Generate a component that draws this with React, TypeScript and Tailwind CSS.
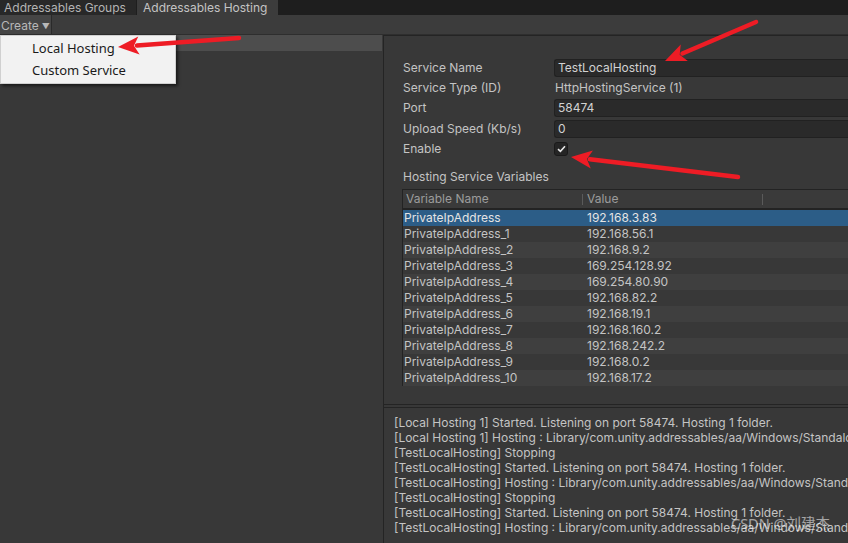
const ui = { fontFamily: 'Inter, "Noto Sans", sans-serif' };

const vars: [string, string][] = [
  ["PrivateIpAddress", "192.168.3.83"],
  ["PrivateIpAddress_1", "192.168.56.1"],
  ["PrivateIpAddress_2", "192.168.9.2"],
  ["PrivateIpAddress_3", "169.254.128.92"],
  ["PrivateIpAddress_4", "169.254.80.90"],
  ["PrivateIpAddress_5", "192.168.82.2"],
  ["PrivateIpAddress_6", "192.168.19.1"],
  ["PrivateIpAddress_7", "192.168.160.2"],
  ["PrivateIpAddress_8", "192.168.242.2"],
  ["PrivateIpAddress_9", "192.168.0.2"],
  ["PrivateIpAddress_10", "192.168.17.2"],
];

const logs = [
  "[Local Hosting 1] Started. Listening on port 58474. Hosting 1 folder.",
  "[Local Hosting 1] Hosting : Library/com.unity.addressables/aa/Windows/StandaloneWindows64",
  "[TestLocalHosting] Stopping",
  "[TestLocalHosting] Started. Listening on port 58474. Hosting 1 folder.",
  "[TestLocalHosting] Hosting : Library/com.unity.addressables/aa/Windows/StandaloneWindows64",
  "[TestLocalHosting] Stopping",
  "[TestLocalHosting] Started. Listening on port 58474. Hosting 1 folder.",
  "[TestLocalHosting] Hosting : Library/com.unity.addressables/aa/Windows/StandaloneWindows64",
];

function Field({ value }: { value: string }) {
  return (
    <div className="flex-1 h-[18px] bg-[#2a2a2a] border border-r-0 border-[#212121] rounded-l-[3px] pl-[3px] leading-[16px] text-[#d2d2d2]">
      {value}
    </div>
  );
}

function Row({ label, children }: { label: string; children: React.ReactNode }) {
  return (
    <div className="flex items-center h-[20px]">
      <div className="w-[151px] shrink-0">{label}</div>
      {children}
    </div>
  );
}

function Arrow({ x1, y1, x2, y2 }: { x1: number; y1: number; x2: number; y2: number }) {
  const dx = x2 - x1;
  const dy = y2 - y1;
  const len = Math.hypot(dx, dy);
  const ux = dx / len;
  const uy = dy / len;
  const bx = x2 - ux * 21;
  const by = y2 - uy * 21;
  const px = -uy * 9;
  const py = ux * 9;
  return (
    <g>
      <line x1={x1} y1={y1} x2={bx + ux * 2} y2={by + uy * 2} stroke="#ee1c25" strokeWidth="4.5" strokeLinecap="round" />
      <polygon points={`${x2},${y2} ${bx + px},${by + py} ${bx + ux * 5},${by + uy * 5} ${bx - px},${by - py}`} fill="#ee1c25" />
    </g>
  );
}

export default function App() {
  return (
    <div className="relative w-[848px] h-[543px] overflow-hidden bg-[#383838] text-[12px] text-[#c4c4c4] flex flex-col" style={ui}>
      {/* tabs */}
      <div className="h-[15px] flex bg-[#1e1e1e] leading-[15px] shrink-0">
        <div className="w-[136px] bg-[#282828] pl-[4px] text-[#b4b4b4]">Addressables Groups</div>
        <div className="w-[141px] ml-[1px] bg-[#3c3c3c] pl-[6px] text-[#c4c4c4]">Addressables Hosting</div>
      </div>

      {/* toolbar */}
      <div className="h-[20px] bg-[#3c3c3c] flex shrink-0 border-b border-[#2e2e2e]">
        <div className="w-[52px] bg-[#454545] border-r border-[#2a2a2a] flex items-center pl-[1px] pt-[2px] text-[#b8b8b8]">
          Create
          <span className="ml-[3px] text-[8px]">▼</span>
        </div>
      </div>

      <div className="flex-1 flex min-h-0">
        {/* left list */}
        <div className="w-[384px] shrink-0 border-r border-[#242424]">
          <div className="w-[382px] h-[16px] bg-[#4d4d4d]" />
        </div>

        {/* right panel */}
        <div className="flex-1 flex flex-col gap-[2px] min-w-0">
          <div className="h-[370px] shrink-0 border-t border-b border-[#242424] pl-[19px] pt-[22px]">
            <Row label="Service Name">
              <Field value="TestLocalHosting" />
            </Row>
            <Row label="Service Type (ID)">
              <div className="pl-[1px]">HttpHostingService (1)</div>
            </Row>
            <Row label="Port">
              <Field value="58474" />
            </Row>
            <div className="mt-[1px]">
              <Row label="Upload Speed (Kb/s)">
                <Field value="0" />
              </Row>
            </div>
            <Row label="Enable">
              <div className="w-[14px] h-[14px] bg-[#252525] border border-[#1a1a1a] rounded-[3px] flex items-center justify-center">
                <svg width="9" height="8" viewBox="0 0 9 8">
                  <path d="M1 4.2 L3.4 6.4 L8 1.2" fill="none" stroke="#e6e6e6" strokeWidth="1.6" />
                </svg>
              </div>
            </Row>
            <div className="mt-[10px] h-[16px] leading-[16px]">Hosting Service Variables</div>

            <div className="mt-[4px] -ml-px border-l border-[#232323]">
              <div className="h-[21px] flex items-center bg-[#3a3a3a] border-t border-b-2 border-[#232323] text-[#9c9c9c]">
                <div className="w-[179px] pl-[3px]">Variable Name</div>
                <div className="w-px h-[11px] bg-[#5a5a5a]" />
                <div className="w-[179px] pl-[4px]">Value</div>
                <div className="w-px h-[11px] bg-[#5a5a5a]" />
              </div>
              {vars.map(([n, v], i) => (
                <div
                  key={n}
                  className={`h-[16px] flex leading-[16px] ${
                    i === 0 ? "bg-[#2c5d87] text-[#e4e4e4]" : i % 2 === 0 ? "bg-[#3f3f3f]" : "bg-[#383838]"
                  }`}
                >
                  <div className="w-[184px] pl-[1px]">{n}</div>
                  <div>{v}</div>
                </div>
              ))}
            </div>
          </div>

          <div className="flex-1 border-t border-[#242424] pl-[10px] pt-[7px] leading-[15px] whitespace-nowrap overflow-hidden">
            {logs.map((l, i) => (
              <div key={i}>{l}</div>
            ))}
          </div>
        </div>
      </div>

      {/* dropdown menu */}
      <div
        className="absolute left-0 top-[35px] w-[176px] h-[49px] bg-[#f2f2f2] border border-[#d0d0d0] shadow-[2px_2px_3px_rgba(0,0,0,0.55)] pt-[1px] text-[13px] text-[#1a1a1a]"
        style={{ fontFamily: '"Noto Sans", "Noto Sans CJK SC", sans-serif' }}
      >
        <div className="h-[22px] leading-[22px] pl-[31px]">Local Hosting</div>
        <div className="h-[22px] leading-[22px] pl-[31px]">Custom Service</div>
      </div>

      {/* annotation arrows */}
      <svg className="absolute inset-0 pointer-events-none" width="848" height="543">
        <Arrow x1={239} y1={38} x2={118} y2={47} />
        <Arrow x1={756} y1={22} x2={665} y2={61} />
        <Arrow x1={738} y1={177} x2={571} y2={157} />
      </svg>

      {/* watermark */}
      <div
        className="absolute left-[731px] top-[513px] text-[14.5px] leading-[20px] text-white/55"
        style={{ fontFamily: '"Noto Sans", "Noto Sans CJK SC", sans-serif' }}
      >
        CSDN @刘建杰
      </div>
    </div>
  );
}
